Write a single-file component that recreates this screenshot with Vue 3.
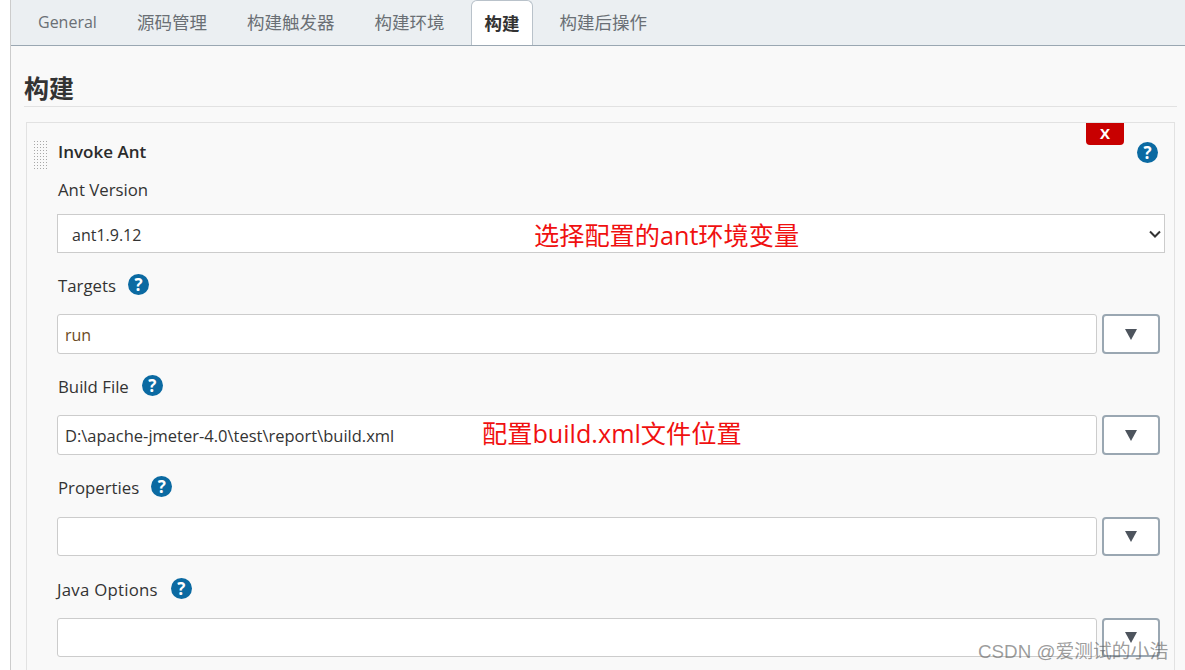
<script setup>
const fields = [
  { label: 'Targets', value: 'run', cls: 'f-targets', valueCls: 'brown' },
  { label: 'Build File', value: 'D:\\apache-jmeter-4.0\\test\\report\\build.xml', cls: 'f-build', valueCls: 'path' },
  { label: 'Properties', value: '', cls: 'f-props', valueCls: '' },
  { label: 'Java Options', value: '', cls: 'f-java', valueCls: '' }
]
const tabs = ['General', '源码管理', '构建触发器', '构建环境', '构建', '构建后操作']
</script>

<template>
  <div class="page">
    <div class="panel">
      <nav class="tabs">
        <span v-for="t in tabs" :key="t" class="tab" :class="{ active: t === '构建', latin: t === 'General' }">{{ t }}</span>
      </nav>
      <section class="content">
        <h2 class="heading">构建</h2>
        <div class="card">
          <button class="del">X</button>
          <div class="handle"></div>
          <div class="title-row">
            <span class="title">Invoke Ant</span>
            <span class="help help-top">?</span>
          </div>
          <div class="label first">Ant Version</div>
          <div class="select">
            <span class="select-value">ant1.9.12</span>
            <svg class="chev" width="12" height="8" viewBox="0 0 12 8"><path d="M1 1.5l5 5 5-5" fill="none" stroke="#333" stroke-width="2"/></svg>
          </div>
          <div v-for="f in fields" :key="f.label" class="field" :class="f.cls">
            <div class="label">{{ f.label }}<span class="help">?</span></div>
            <div class="input-row">
              <div class="input" :class="f.valueCls">{{ f.value }}</div>
              <div class="drop"><i class="tri"></i></div>
            </div>
          </div>
        </div>
      </section>
    </div>
    <div class="note n1">选择配置的ant环境变量</div>
    <div class="note n2">配置build.xml文件位置</div>
    <div class="mark">CSDN @爱测试的小浩</div>
  </div>
</template>

<style scoped>
.page {
  position: relative;
  width: 1185px;
  height: 670px;
  overflow: hidden;
  background: #fff;
  font-family: "Open Sans", "Noto Sans CJK SC", sans-serif;
  color: #333;
  box-sizing: border-box;
  padding-left: 10px;
}
.panel {
  height: 100%;
  border-left: 1px solid #ccc;
  background: #f9f9f9;
}
.tabs {
  height: 45px;
  background: #ebeff2;
  border-bottom: 1px solid #9aa7b2;
  display: flex;
  padding-left: 7px;
}
.tab {
  font-size: 17.5px;
  line-height: 45px;
  color: #6a6f75;
  padding: 0 20px;
  white-space: nowrap;
}
.tab.latin { font-size: 16px; }
.tab.active {
  height: 45px;
  margin: 0 6px 0 7px;
  padding: 0 13px 0 12px;
  box-sizing: border-box;
  background: #fff;
  color: #333;
  font-weight: 700;
  border: 1px solid #b9c2ca;
  border-bottom: 0;
  border-radius: 6px 6px 0 0;
}
.content { padding: 0 8px 0 13px; }
.heading {
  margin: 0;
  height: 61px;
  box-sizing: border-box;
  padding-top: 25px;
  line-height: 34px;
  font-size: 25px;
  font-weight: 700;
  color: #333;
  border-bottom: 1px solid #e2e2e2;
}
.card {
  position: relative;
  margin: 15px 2px 0 2px;
  width: 1149px;
  height: 560px;
  box-sizing: border-box;
  border: 1px solid #e2e2e2;
  padding-left: 30px;
}
.del {
  position: absolute;
  top: 0;
  right: 50px;
  width: 38px;
  height: 22px;
  padding: 0 0 3px;
  border: 0;
  border-radius: 0 0 4px 4px;
  background: #c80000;
  color: #fff;
  font: 700 15px "Open Sans", sans-serif;
}
.handle {
  position: absolute;
  left: 6px;
  top: 17px;
  width: 15px;
  height: 30px;
  background-image: radial-gradient(#a8a8a8 1px, transparent 1px);
  background-size: 3px 3px;
}
.title-row {
  height: 59px;
  display: flex;
  align-items: center;
  justify-content: space-between;
  padding-left: 1px;
}
.title {
  font-size: 17px;
  font-weight: 600;
  color: #2b2b2b;
  transform: translateY(-1px);
}
.help {
  display: inline-block;
  width: 21px;
  height: 21px;
  margin-left: 12px;
  border-radius: 50%;
  background: #0b6aa2;
  color: #fff;
  text-align: center;
  font: 700 17px/21px "Open Sans", sans-serif;
  vertical-align: 1px;
}
.help-top { margin: 0 16px 0 0; }
.label {
  font-size: 16.8px;
  line-height: 22px;
  height: 22px;
  padding-left: 1px;
  font-weight: 500;
  color: #333;
  white-space: nowrap;
}
.label.first { margin-top: -3px; }
.select {
  margin-top: 13px;
  width: 1108px;
  height: 39px;
  box-sizing: border-box;
  border: 1px solid #ccc;
  background: #fff;
  display: flex;
  align-items: center;
  justify-content: space-between;
  padding: 0 3px 0 14px;
  font-size: 16px;
}
.select-value { padding-top: 3px; }
.field { padding-top: 21px; }
.f-build .help { margin-left: 13px; }
.f-props .input-row { margin-top: 19px; }
.f-java { padding-top: 22px; }
.f-java .label { padding-left: 0; letter-spacing: 0.25px; }
.f-java .help { margin-left: 13px; }
.input-row {
  margin-top: 18px;
  display: flex;
  gap: 5px;
}
.f-props .input, .f-props .drop,
.f-java .input, .f-java .drop { height: 39px; }
.input {
  width: 1040px;
  height: 40px;
  box-sizing: border-box;
  border: 1px solid #ccc;
  border-radius: 3px;
  background: #fff;
  padding-left: 7px;
  font-size: 16px;
  line-height: 40px;
  color: #333;
}
.input.brown { color: #6b4a1e; }
.input.path { font-size: 16.5px; }
.drop {
  width: 58px;
  height: 40px;
  box-sizing: border-box;
  border: 2px solid #9aa7b2;
  border-radius: 4px;
  background: #fff;
  display: flex;
  align-items: center;
  justify-content: center;
}
.tri {
  width: 0;
  height: 0;
  border-left: 6px solid transparent;
  border-right: 6px solid transparent;
  border-top: 11px solid #4d545d;
}
.note {
  position: absolute;
  color: #f01010;
  font-size: 25.2px;
  line-height: 34px;
  white-space: nowrap;
}
.n1 { left: 534px; top: 218px; }
.n2 { left: 482px; top: 416px; }
.mark {
  position: absolute;
  left: 978px;
  top: 639px;
  font-size: 18.8px;
  line-height: 26px;
  color: rgba(90, 90, 90, 0.6);
  font-family: "Liberation Sans", "Noto Sans CJK SC", sans-serif;
  white-space: nowrap;
}
</style>
